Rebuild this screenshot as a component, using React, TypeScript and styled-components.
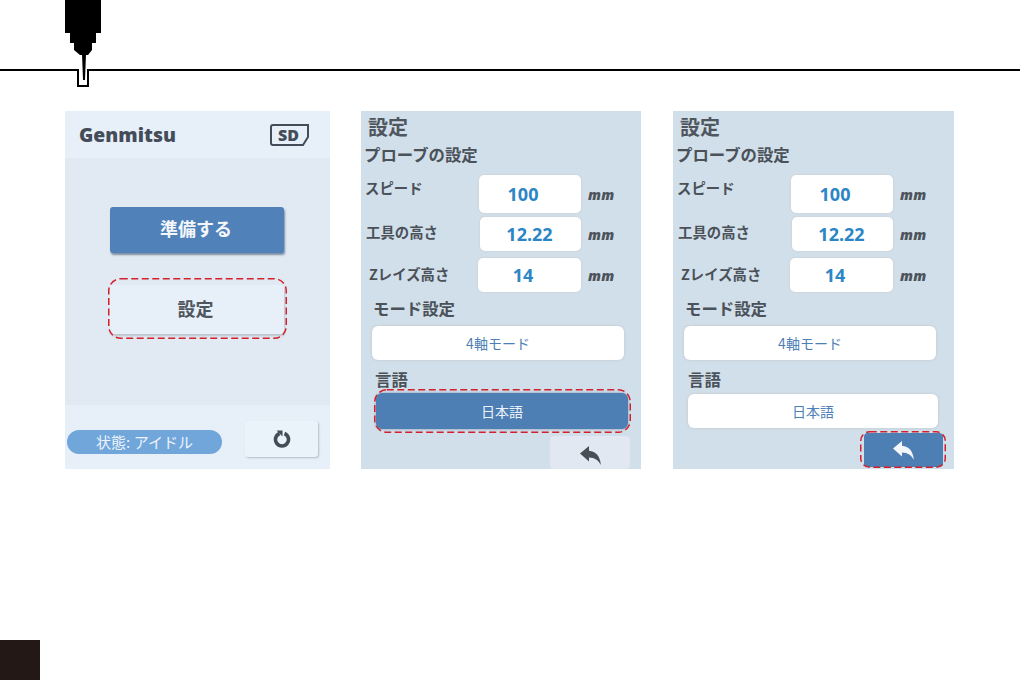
import React from "react";
import styled, { createGlobalStyle } from "styled-components";

const Global = createGlobalStyle`
  html, body { margin: 0; padding: 0; background: #fff; }
  body { font-family: "Noto Sans CJK JP", "Noto Sans", sans-serif; overflow: hidden; }
`;

const Page = styled.div`width: 1020px; height: 680px; display: flex; flex-direction: column;`;
const Banner = styled.svg`display: block; width: 1020px; height: 111px; flex: none;`;
const Screens = styled.div`display: flex; padding-left: 65px; height: 358px; flex: none;`;
const PageTab = styled.div`width: 40px; height: 40px; margin-top: 171px; background: #231815; flex: none;`;

const HomeScreen = styled.section`
  width: 265px; height: 358px; flex: none; margin-right: 31px;
  display: flex; flex-direction: column; background: #e1e9f3;
`;
const HomeHeader = styled.header`
  height: 47px; padding: 0 20px 0 14px; background: #e7f0f9;
  display: flex; align-items: center; justify-content: space-between;
`;
const Brand = styled.span`
  font-family: "Open Sans", sans-serif; font-weight: 800; font-size: 19.4px; color: #454c59;
`;
const SdCard = styled.svg`width: 40px; height: 24px; display: block;`;
const HomeBody = styled.div`
  height: 247px; padding: 49px 46px 0 45px; box-sizing: border-box;
  display: flex; flex-direction: column; gap: 32px;
`;
const MainButton = styled.div<{ $primary?: boolean }>`
  position: relative; height: ${p => (p.$primary ? 46 : 49)}px; box-sizing: border-box;
  padding: 0 ${p => (p.$primary ? 2 : 3)}px 4px 0;
  display: flex; align-items: center; justify-content: center;
  border-radius: 3px; font-size: 18px; font-weight: 700;
  background: ${p => (p.$primary ? "#5082b9" : "#e7f0f9")};
  color: ${p => (p.$primary ? "#f4f7fb" : "#50565e")};
  box-shadow: 1px 2px 2px ${p => (p.$primary ? "#7d8ea3" : "#bcc4cc")};
`;
const HighlightFrame = styled.svg<{ $t: number; $r: number; $b: number; $l: number }>`
  position: absolute; top: ${p => p.$t}px; left: ${p => p.$l}px; overflow: visible; pointer-events: none;
  width: calc(100% + ${p => -p.$l - p.$r}px); height: calc(100% + ${p => -p.$t - p.$b}px);
`;
const HighlightLine = styled.rect`
  x: 0.75px; y: 0.75px; width: calc(100% - 1.5px); height: calc(100% - 1.5px);
  fill: none; stroke: #d2202c; stroke-width: 1.5px; stroke-dasharray: 7 3.5;
`;
const Highlight: React.FC<{ t: number; r: number; b: number; l: number; radius?: number }> = ({ t, r, b, l, radius = 12 }) => (
  <HighlightFrame $t={t} $r={r} $b={b} $l={l}>
    <HighlightLine rx={radius} ry={radius} />
  </HighlightFrame>
);
const HomeFooter = styled.footer`
  flex: 1; background: #e7f0f9; padding: 16px 12px 12px 2px;
  display: flex; align-items: center; justify-content: space-between;
`;
const StatusPill = styled.div`
  width: 155px; height: 24px; border-radius: 12px; background: #70a6da; color: #edf3fa;
  font-size: 15px; display: flex; align-items: center; justify-content: center; margin-top: 5px; white-space: nowrap;
`;
const RefreshButton = styled.div`
  width: 73px; height: 36px; border-radius: 3px; background: #eaf2fa; box-shadow: 1px 1px 2px #b4bcc6;
  display: flex; align-items: center; justify-content: center; color: #454c59;
`;

const SettingsScreen = styled.section<{ $mr: number; $w: number }>`
  width: ${p => p.$w}px; height: 358px; flex: none; margin-right: ${p => p.$mr}px; overflow: hidden;
  background: #d1dfea; color: #4a5159; display: flex; flex-direction: column; position: relative;
`;
const Title = styled.h1`
  margin: 2px 0 0 7px; font-size: 20px; line-height: 28px; font-weight: 700; color: #50565e;
`;
const Subtitle = styled.h2`
  margin: 2px 0 0 3px; font-size: 16.4px; line-height: 22px; font-weight: 700; color: #4a5159; white-space: nowrap;
`;
const Fields = styled.div`display: flex; flex-direction: column; margin-top: 10px;`;
const FieldRow = styled.div<{ $h: number; $mt: number }>`
  height: ${p => p.$h}px; margin-top: ${p => p.$mt}px; display: flex; align-items: center;
`;
const FieldLabel = styled.span<{ $ml: number; $mt: number }>`
  width: ${p => 118 - p.$ml}px; margin-left: ${p => p.$ml}px; margin-top: ${p => p.$mt}px; flex: none;
  font-size: 14.4px; line-height: 18px; font-weight: 700; white-space: nowrap; color: #4a5159;
`;
const ValueBox = styled.div<{ $ml: number; $shift: number }>`
  width: ${p => 102 - p.$ml}px; margin-left: ${p => p.$ml}px; height: 100%; flex: none; box-sizing: border-box;
  padding: 0 ${p => p.$shift}px 0 0;
  display: flex; align-items: center; justify-content: center; border-radius: 5px; background: #fff;
  box-shadow: 0 0 2px #c7c4c2; color: #2c86c5; font-family: "Open Sans", sans-serif; font-weight: 700; font-size: 18px;
`;
const Unit = styled.span`
  margin: 1px 0 0 7px; font-family: "Open Sans", sans-serif; font-weight: 800; font-style: italic; font-size: 14px; letter-spacing: 0.2px; color: #4d535b;
`;
const SectionLabel = styled.h3<{ $ml: number; $mt: number }>`
  margin: ${p => p.$mt}px 0 0 ${p => p.$ml}px; font-size: 16.4px; line-height: 20px; font-weight: 700; color: #4a5159;
`;
const Choice = styled.div<{ $ml: number; $w: number; $h: number; $mt: number; $active?: boolean }>`
  position: relative; flex: none; width: ${p => p.$w}px; height: ${p => p.$h}px; box-sizing: border-box;
  margin: ${p => p.$mt}px 0 0 ${p => p.$ml}px; border-radius: 6px; padding-bottom: 1px;
  display: flex; align-items: center; justify-content: center; font-size: 14px; font-weight: 400;
  background: ${p => (p.$active ? "#4d7eb4" : "#fff")};
  color: ${p => (p.$active ? "#eef3f9" : "#4e7fb6")};
  box-shadow: 0 0 3px ${p => (p.$active ? "#7f94ab" : "#bfc3c6")};
`;
const BackButton = styled.div<{ $active?: boolean; $mt: number; $ml: number; $w: number; $h: number }>`
  position: relative; flex: none; width: ${p => p.$w}px; height: ${p => p.$h}px; box-sizing: border-box;
  padding-top: ${p => (p.$active ? 0 : 5)}px;
  margin: ${p => p.$mt}px 0 0 ${p => p.$ml}px; border-radius: 4px;
  display: flex; align-items: center; justify-content: center;
  background: ${p => (p.$active ? "#4d7eb4" : "#e1e8f1")};
  color: ${p => (p.$active ? "#f3f6fa" : "#484e56")};
`;
const ReplyIcon = styled.svg`width: 21px; height: 19px; display: block;`;

const Reply = () => (
  <ReplyIcon viewBox="0 0 21 19">
    <path fill="currentColor" d="M0 7.500 9 0v4.800c7 .5 11.200 5.500 11.800 14.200-2.500-5-5.800-7.200-11.800-7.500V15.500Z" />
  </ReplyIcon>
);

const fields = [
  { label: "スピード", value: "100", h: 38, mt: 0, lm: 4, lt: -12, vm: 0, shift: 14 },
  { label: "工具の高さ", value: "12.22", h: 34, mt: 4, lm: 5, lt: -4, vm: 1, shift: 2 },
  { label: "Zレイズ高さ", value: "14", h: 34, mt: 7, lm: 8, lt: -2, vm: -1, shift: 13 },
];

const Settings: React.FC<{ mode: "lang" | "back" }> = ({ mode }) => {
  const back = mode === "back";
  return (
    <SettingsScreen $mr={back ? 0 : 32} $w={back ? 281 : 280}>
      <Title>設定</Title>
      <Subtitle>プローブの設定</Subtitle>
      <Fields>
        {fields.map(f => (
          <FieldRow key={f.label} $h={f.h} $mt={f.mt}>
            <FieldLabel $ml={f.lm} $mt={f.lt}>{f.label}</FieldLabel>
            <ValueBox $ml={f.vm} $shift={f.shift}>{f.value}</ValueBox>
            <Unit>mm</Unit>
          </FieldRow>
        ))}
      </Fields>
      <SectionLabel $ml={12} $mt={6}>モード設定</SectionLabel>
      <Choice $ml={11} $w={252} $h={34} $mt={8}>4軸モード</Choice>
      <SectionLabel $ml={back ? 15 : 14} $mt={9}>言語</SectionLabel>
      {back ? (
        <>
          <Choice $ml={15} $w={250} $h={34} $mt={5}>日本語</Choice>
          <BackButton $active $mt={5} $ml={191} $w={79} $h={34}>
            <Reply />
            <Highlight t={-2} r={-3} b={-1} l={-4} radius={9} />
          </BackButton>
        </>
      ) : (
        <>
          <Choice $ml={15} $w={252} $h={36} $mt={4} $active>
            日本語
            <Highlight t={-4} r={-3} b={-4} l={-2} />
          </Choice>
          <BackButton $mt={7} $ml={189} $w={80} $h={33}><Reply /></BackButton>
        </>
      )}
    </SettingsScreen>
  );
};

export default function App() {
  return (
    <Page>
      <Global />
      <Banner viewBox="0 0 1020 111">
        <path fill="#000" d="M65 0H101V33H96V43H92V50L88 55H80L74 50V43H70V33H65Z" />
        <path fill="#000" d="M82 54H86L85 80H83Z" />
        <path fill="none" stroke="#000" strokeWidth="2" d="M0 70H78V86H88V70H1020" />
      </Banner>
      <Screens>
        <HomeScreen>
          <HomeHeader>
            <Brand>Genmitsu</Brand>
            <SdCard viewBox="0 0 40 24">
              <path fill="none" stroke="#454c59" strokeWidth="2" d="M3 2H38V14L33 22H3A2 2 0 0 1 1 20V4A2 2 0 0 1 3 2Z" />
              <text x="18.500" y="18" textAnchor="middle" fontFamily="Open Sans, sans-serif" fontWeight="800" fontSize="16" fill="#454c59">SD</text>
            </SdCard>
          </HomeHeader>
          <HomeBody>
            <MainButton $primary>準備する</MainButton>
            <MainButton>
              設定
              <Highlight t={-7} r={-3} b={-5} l={-2} />
            </MainButton>
          </HomeBody>
          <HomeFooter>
            <StatusPill>状態: アイドル</StatusPill>
            <RefreshButton>
              <svg width="18" height="18" viewBox="0 0 18 18" fill="none">
                <path stroke="currentColor" strokeWidth="3.600" d="M6.500 3.500a6.500 6.500 0 1 0 5 0" />
                <path fill="currentColor" d="M3.500 .5h6v6Z" />
              </svg>
            </RefreshButton>
          </HomeFooter>
        </HomeScreen>
        <Settings mode="lang" />
        <Settings mode="back" />
      </Screens>
      <PageTab />
    </Page>
  );
}
